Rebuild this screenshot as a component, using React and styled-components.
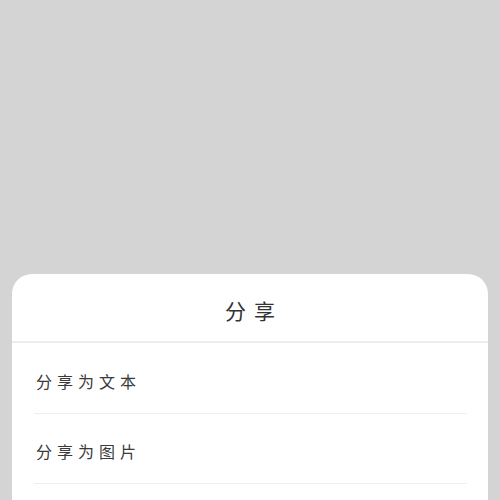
import styled, { createGlobalStyle } from 'styled-components';

const GlobalStyle = createGlobalStyle`
  html, body {
    margin: 0;
    padding: 0;
    overflow: hidden;
    background-color: #d4d4d4;
    font-family: "Noto Sans CJK SC", "Liberation Sans", sans-serif;
  }
`;

const Overlay = styled.div`
  min-height: 100vh;
  padding-top: 274px;
  box-sizing: border-box;
  background-color: #d4d4d4;
`;

const Sheet = styled.div`
  margin: 0 12px;
  background-color: #fff;
  border-radius: 20px 20px 0 0;
  padding-bottom: 40px;
`;

const Header = styled.div`
  height: 69px;
  box-sizing: border-box;
  padding-top: 5px;
  display: flex;
  align-items: center;
  justify-content: center;
  border-bottom: 2px solid #ececec;
`;

const Title = styled.span`
  font-size: 21px;
  color: #333;
  letter-spacing: 8px;
  margin-right: -8px;
`;

const List = styled.div`
  margin: 0 21px 0 22px;
  padding-top: 1px;
`;

const Item = styled.div`
  height: 70px;
  box-sizing: border-box;
  padding: 4px 0 0 2px;
  display: flex;
  align-items: center;
  border-bottom: 1px solid #efefef;
  font-size: 16px;
  letter-spacing: 5px;
  color: #3a3a3a;
  cursor: pointer;
`;

const options = ['分享为文本', '分享为图片'];

const App = () => {
  return (
    <>
      <GlobalStyle />
      <Overlay>
        <Sheet>
          <Header>
            <Title>分享</Title>
          </Header>
          <List>
            {options.map((label) => (
              <Item key={label}>{label}</Item>
            ))}
          </List>
        </Sheet>
      </Overlay>
    </>
  );
};

export default App;
